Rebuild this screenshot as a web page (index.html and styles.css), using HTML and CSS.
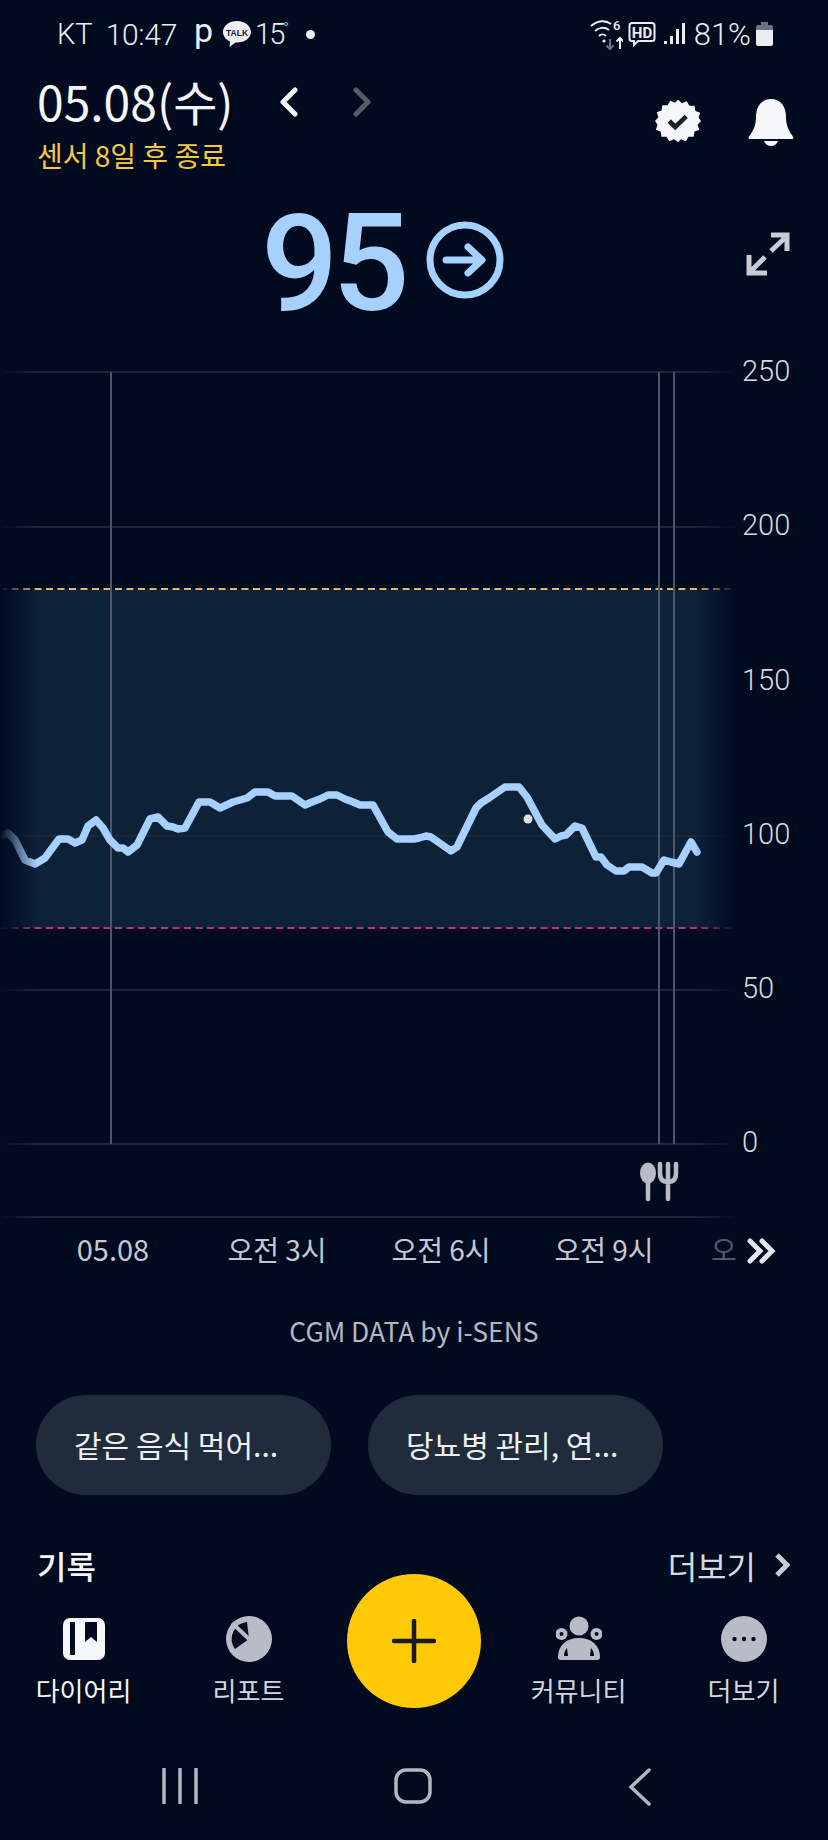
FILE: index.html
```html
<!DOCTYPE html>
<html>
<head>
  <meta charset="utf-8">
  <link rel="stylesheet" href="styles.css">
</head>
<body>

<div class="status">
  <div class="status-left">
    <span>KT</span>
    <span class="status-time">10:47</span>
    <span class="status-p">p</span>
    <svg class="talk" width="30" height="28" viewBox="0 0 30 28">
      <path class="icon-light" d="M15 1C7 1 1 5.800 1 12c0 4.200 2.800 7.600 7 9.400L7.500 27l6-4.600c.5 0 1 .1 1.500.1 8 0 14-4.800 14-10.500S23 1 15 1z"/>
      <text class="talk-text" x="15" y="15.500" text-anchor="middle">TALK</text>
    </svg>
    <span class="status-temp">15<sup>°</sup></span>
    <span class="status-dot"></span>
  </div>
  <div class="status-right">
    <svg width="34" height="34" viewBox="0 0 34 34">
      <g class="wifi">
        <path d="M2 9c7-6 15-6 20 -2"/>
        <path d="M6 14c4-4 10-4 14-1"/>
        <path d="M10 19c2-2 5-2 7 0"/>
      </g>
      <circle class="icon-light" cx="15" cy="24" r="1.600"/>
      <text class="wifi-six" x="24" y="13">6</text>
      <path class="wifi-arrow dim" d="M21 22v10m-3.500-3.500L21 32l3.500-3.500"/>
      <path class="wifi-arrow" d="M31 32V21m-3.500 3.500L31 21l3.500 3.500"/>
    </svg>
    <svg width="28" height="26" viewBox="0 0 28 26">
      <path class="hd-box" d="M4 2h20a2.500 2.500 0 0 1 2.500 2.500v13a2.500 2.500 0 0 1-2.500 2.500H10l-4 4v-4H4a2.500 2.500 0 0 1-2.500-2.500v-13A2.500 2.500 0 0 1 4 2z"/>
      <text class="hd-text" x="14" y="16.500" text-anchor="middle">HD</text>
    </svg>
    <svg class="signal" width="22" height="24" viewBox="0 0 22 24">
      <rect class="icon-light" x="0" y="19" width="3" height="3"/>
      <rect class="icon-light" x="6" y="14" width="3" height="8"/>
      <rect class="icon-light" x="12" y="7" width="3" height="15"/>
      <rect class="icon-light" x="18" y="1" width="3" height="21"/>
    </svg>
    <span class="status-pct">81%</span>
    <svg width="17" height="24" viewBox="0 0 17 24">
      <path class="battery-top" d="M5 0h7v3h3a2 2 0 0 1 2 2v3H0V5a2 2 0 0 1 2-2h3z"/>
      <path class="icon-light" d="M0 8h17v14a2 2 0 0 1-2 2H2a2 2 0 0 1-2-2z"/>
    </svg>
  </div>
</div>

<div class="header">
  <div>
    <div class="date-row">
      <span class="date">05.08(수)</span>
      <svg class="date-prev" width="20" height="30" viewBox="0 0 20 30">
        <path class="chev" d="M16 3L4 15l12 12"/>
      </svg>
      <svg class="date-next" width="20" height="30" viewBox="0 0 20 30">
        <path class="chev chev-off" d="M4 3l12 12L4 27"/>
      </svg>
    </div>
    <div class="sensor">센서 8일 후 종료</div>
  </div>
  <div class="header-icons">
    <svg width="46" height="46" viewBox="-1 -1 50 50">
      <path class="icon-white" d="M24 1l4.300 3.600 5.200-2 2.900 4.800 5.600.1.900 5.500 5.200 2-1.800 5.300L49 24l-3.700 4.200 1.800 5.300-5.200 2-.9 5.500-5.600.1-2.900 4.800-5.200-2L24 47l-4.300-3.100-5.200 2-2.900-4.800-5.600-.1-.9-5.500-5.200-2 1.800-5.300L-1 24l3.700-4.200L.9 14.500l5.200-2 .9-5.500 5.600-.1 2.900-4.800 5.200 2z"/>
      <path class="badge-check" d="M14.500 24l6.500 6.500L33 19"/>
    </svg>
    <svg class="bell" width="48" height="48" viewBox="0 0 48 48">
      <path class="icon-white" d="M24 1C14 1 9 9 9 19c0 9-3 14-7 19.500-.8 1.200-.4 2.500 1 2.500h42c1.400 0 1.800-1.300 1-2.500C42 33 39 28 39 19 39 9 34 1 24 1z"/>
      <path class="icon-white" d="M17 43h14c-1 3-4 5-7 5s-6-2-7-5z"/>
    </svg>
  </div>
</div>

<div class="hero">
  <span class="value">95</span>
  <svg class="trend" width="80" height="80" viewBox="0 0 80 80">
    <circle class="trend-ring" cx="40" cy="40" r="35"/>
    <path class="trend-arrow" d="M21 40h35M43 27l14 13-14 13"/>
  </svg>
  <svg class="expand" width="44" height="44" viewBox="0 0 44 44">
    <path class="expand-line" d="M25 19L41 4M25 3h16v16M19 25L4 40M3 23v18h18"/>
  </svg>
</div>

<svg class="chart" width="828" height="940" viewBox="0 340 828 940">
  <defs>
    <linearGradient id="edgeFade" gradientUnits="userSpaceOnUse" x1="0" y1="0" x2="828" y2="0">
      <stop offset="0" stop-color="#000"/>
      <stop offset="0.045" stop-color="#fff"/>
      <stop offset="0.84" stop-color="#fff"/>
      <stop offset="0.89" stop-color="#000"/>
    </linearGradient>
    <mask id="edgeMask" maskUnits="userSpaceOnUse" x="0" y="340" width="828" height="940">
      <rect x="0" y="340" width="828" height="940" fill="url(#edgeFade)"/>
    </mask>
  </defs>

  <g mask="url(#edgeMask)">
    <rect class="band" x="0" y="589" width="740" height="339"/>
    <line class="grid" x1="0" y1="372" x2="740" y2="372"/>
    <line class="grid" x1="0" y1="527" x2="740" y2="527"/>
    <line class="grid" x1="0" y1="836" x2="740" y2="836"/>
    <line class="grid" x1="0" y1="990" x2="740" y2="990"/>
    <line class="grid" x1="0" y1="1144" x2="740" y2="1144"/>
    <line class="grid" x1="0" y1="1217" x2="740" y2="1217"/>
    <line class="limit-high" x1="0" y1="589" x2="740" y2="589"/>
    <line class="limit-low" x1="0" y1="928" x2="740" y2="928"/>
  </g>

  <line class="marker" x1="111" y1="372" x2="111" y2="1144"/>
  <line class="marker" x1="659" y1="372" x2="659" y2="1144"/>
  <line class="marker" x1="674" y1="372" x2="674" y2="1144"/>

  <g mask="url(#edgeMask)">
    <path class="curve" d="M3 835L8 833 15 840 25 860 35 864 45 858 59 839 68 839 75 843 82 840 88 826 96 820 103 828 110 840 118 848 123 848 128 852 137 845 150 819 158 817 167 826 173 827 178 829 185 828 199 802 210 802 220 808 233 802 240 800 247 798 255 792 268 792 275 796 292 796 305 805 312 802 320 799 328 795 337 795 345 799 353 802 360 805 373 805 388 832 397 839 414 839 419 838 426 836 431 837 451 851 457 847 476 808 481 803 489 798 505 787 519 787 527 797 542 825 555 839 561 836 566 835 575 826 582 828 596 857 601 857 607 865 616 871 624 871 629 867 642 867 652 873 656 873 664 860 671 862 679 864 691 842 697 852"/>
  </g>
  <circle class="point" cx="528" cy="819" r="4.500"/>

  <g class="meal">
    <ellipse cx="648" cy="1173" rx="8" ry="10.500"/>
    <line class="meal-stem" x1="648" y1="1178" x2="648" y2="1199"/>
    <path class="meal-fork" d="M660 1164v9c0 6 3 9 8 9s8-3 8-9v-9M668 1164v35"/>
  </g>

  <g class="y-labels">
    <text x="742" y="381">250</text>
    <text x="742" y="535">200</text>
    <text x="742" y="690">150</text>
    <text x="742" y="844">100</text>
    <text x="742" y="998">50</text>
    <text x="742" y="1152">0</text>
  </g>

  <g class="x-labels">
    <text class="x-label-date" x="113" y="1261">05.08</text>
    <text x="277" y="1261">오전 3시</text>
    <text x="441" y="1261">오전 6시</text>
    <text x="604" y="1261">오전 9시</text>
    <text class="x-label-fade" x="724" y="1261">오</text>
  </g>
  <path class="more-chev" d="M750 1241l10 10-10 10M762 1241l10 10-10 10"/>
</svg>

<div class="source">CGM DATA by i-SENS</div>

<div class="chips">
  <div class="chip">같은 음식 먹어...</div>
  <div class="chip">당뇨병 관리, 연...</div>
</div>

<div class="section">
  <span class="section-title">기록</span>
  <span class="section-more">더보기
    <svg width="16" height="24" viewBox="0 0 16 24">
      <path class="more-arrow" d="M3 2l10 10L3 22"/>
    </svg>
  </span>
</div>

<div class="tabs">
  <div class="tab tab-on">
    <svg width="46" height="46" viewBox="0 0 46 46">
      <rect class="icon-white" x="2" y="2" width="42" height="42" rx="7"/>
      <rect class="icon-cut" x="9" y="6" width="5" height="33"/>
      <path class="icon-cut" d="M24 6h12v20l-6-5-6 5z"/>
    </svg>
    <span>다이어리</span>
  </div>
  <div class="tab">
    <svg width="46" height="46" viewBox="0 0 46 46">
      <circle class="icon-gray" cx="23" cy="23" r="23"/>
      <path class="icon-cut" d="M23 23L21 6A17 17 0 0 0 9 33z"/>
      <line class="pie-split" x1="23" y1="23" x2="6" y2="7"/>
    </svg>
    <span>리포트</span>
  </div>
  <div class="tab tab-add">
    <svg width="44" height="44" viewBox="0 0 44 44">
      <path class="plus" d="M2 22h40M22 2v40"/>
    </svg>
  </div>
  <div class="tab">
    <svg width="46" height="46" viewBox="0 0 46 46">
      <circle class="icon-gray" cx="23" cy="10" r="9.500"/>
      <circle class="icon-gray" cx="5.500" cy="18" r="6"/>
      <circle class="icon-cut" cx="5.500" cy="18" r="2"/>
      <circle class="icon-gray" cx="40.500" cy="18" r="6"/>
      <circle class="icon-cut" cx="40.500" cy="18" r="2"/>
      <path class="icon-gray" d="M2 41c0-12 9-19 21-19s21 7 21 19c0 2-1 3-3 3H5c-2 0-3-1-3-3z"/>
      <path class="icon-cut" d="M8 40c0-3 1-6 3-8l1 8zM38 40c0-3-1-6-3-8l-1 8z"/>
    </svg>
    <span>커뮤니티</span>
  </div>
  <div class="tab">
    <svg width="46" height="46" viewBox="0 0 46 46">
      <circle class="icon-gray" cx="23" cy="23" r="23"/>
      <circle class="icon-cut" cx="13.500" cy="23" r="2.200"/>
      <circle class="icon-cut" cx="23" cy="23" r="2.200"/>
      <circle class="icon-cut" cx="32.500" cy="23" r="2.200"/>
    </svg>
    <span>더보기</span>
  </div>
</div>

<div class="sysnav">
  <svg width="36" height="36" viewBox="0 0 36 36">
    <path class="sys-line" d="M2 1v34M18 1v34M34 1v34"/>
  </svg>
  <svg width="38" height="36" viewBox="0 0 38 36">
    <rect class="sys-line" x="2" y="2" width="34" height="32" rx="10"/>
  </svg>
  <svg width="24" height="38" viewBox="0 0 24 38">
    <path class="sys-line" d="M21 2L3 19l18 17"/>
  </svg>
</div>

</body>
</html>
```

FILE: styles.css
```css
html, body {
  margin: 0;
  padding: 0;
}

body {
  width: 828px;
  height: 1840px;
  overflow: hidden;
  background-color: #020a20;
  color: #f4f5f7;
  font-family: "Noto Sans CJK KR", "Noto Sans", sans-serif;
}

svg {
  display: block;
  flex: none;
}

/* status bar */
.status {
  height: 68px;
  padding: 0 55px 0 57px;
  box-sizing: border-box;
  display: flex;
  align-items: center;
  justify-content: space-between;
  font-family: Roboto, sans-serif;
  font-size: 29px;
  font-weight: 300;
  color: #eceef1;
}

.status-left, .status-right {
  display: flex;
  align-items: center;
}

.status-time {
  margin-left: 13px;
  font-size: 30px;
  letter-spacing: -0.3px;
}

.status-p {
  margin-left: 17px;
  font-weight: 400;
  font-size: 34px;
  line-height: 28px;
  margin-top: -8px;
}

.talk {
  margin-left: 9px;
}

.talk-text {
  font-family: "Liberation Sans", sans-serif;
  font-size: 8.500px;
  font-weight: 700;
  fill: #1a2030;
}

.status-temp {
  margin-left: 3px;
  letter-spacing: -2px;
}

.status-temp sup {
  font-size: 15px;
  line-height: 0;
}

.status-dot {
  width: 9px;
  height: 9px;
  margin-left: 19px;
  border-radius: 50%;
  background-color: #eceef1;
}

.status-right {
  gap: 5px;
}

.wifi path {
  fill: none;
  stroke: #eceef1;
  stroke-width: 2;
}

.wifi-six {
  font-size: 13px;
  font-weight: 500;
  fill: #eceef1;
}

.wifi-arrow {
  fill: none;
  stroke: #eceef1;
  stroke-width: 2;
}

.wifi-arrow.dim {
  stroke: #6c7280;
}

.hd-box {
  fill: none;
  stroke: #eceef1;
  stroke-width: 2;
}

.hd-text {
  font-size: 15px;
  font-weight: 700;
  fill: #eceef1;
}

.signal {
  margin-left: 3px;
}

.status-pct {
  margin-left: 3px;
  font-size: 31px;
}

.icon-light {
  fill: #eceef1;
}

.battery-top {
  fill: #6c7280;
}

/* header */
.header {
  height: 112px;
  padding: 0 33px 0 37px;
  box-sizing: border-box;
  display: flex;
  justify-content: space-between;
}

.date-row {
  display: flex;
  align-items: center;
  height: 68px;
}

.date {
  font-size: 48px;
  font-weight: 400;
  line-height: 68px;
  margin-top: -4px;
  width: 242px;
  white-space: nowrap;
}

.date-next {
  margin-left: 53px;
}

.chev {
  fill: none;
  stroke: #f4f5f7;
  stroke-width: 5;
  stroke-linecap: round;
  stroke-linejoin: round;
}

.chev-off {
  stroke: #555c6a;
}

.sensor {
  font-size: 28px;
  line-height: 38px;
  color: #f5c93f;
}

.header-icons {
  display: flex;
  gap: 46px;
  padding-top: 30px;
}

.icon-white {
  fill: #f6f7f9;
}

.badge-check {
  fill: none;
  stroke: #1a2030;
  stroke-width: 5;
}

/* current value */
.hero {
  height: 160px;
  padding: 0 38px 0 261px;
  display: flex;
  align-items: center;
}

.value {
  font-family: Roboto, sans-serif;
  font-size: 136px;
  font-weight: 500;
  line-height: 160px;
  margin-top: 8px;
  color: #a6d0fd;
  letter-spacing: -6px;
}

.trend {
  margin-left: 21px;
}

.trend-ring {
  fill: none;
  stroke: #a6d0fd;
  stroke-width: 7;
}

.trend-arrow {
  fill: none;
  stroke: #a6d0fd;
  stroke-width: 7;
  stroke-linecap: round;
  stroke-linejoin: round;
}

.expand {
  margin-left: auto;
  margin-top: -12px;
}

.expand-line {
  fill: none;
  stroke: #c9ccd4;
  stroke-width: 5;
}

/* chart */
.band {
  fill: #0d2138;
}

.grid {
  stroke: #1c2739;
  stroke-width: 2;
}

.limit-high {
  stroke: #e9b56a;
  stroke-width: 2;
  stroke-dasharray: 7 4.500;
}

.limit-low {
  stroke: #b8386f;
  stroke-width: 2;
  stroke-dasharray: 7 4.500;
}

.marker {
  stroke: #4b5669;
  stroke-width: 2;
}

.curve {
  fill: none;
  stroke: #a6d0fd;
  stroke-width: 7.500;
  stroke-linejoin: round;
  stroke-linecap: round;
}

.point {
  fill: #dfe2e7;
}

.meal ellipse {
  fill: #b8bcc6;
}

.meal-stem, .meal-fork {
  fill: none;
  stroke: #b8bcc6;
  stroke-width: 4.500;
  stroke-linecap: round;
}

.y-labels text {
  font-family: Roboto, sans-serif;
  font-size: 29px;
  font-weight: 300;
  fill: #d7dade;
}

.x-labels text {
  font-size: 28px;
  font-weight: 400;
  fill: #c4c8d0;
  text-anchor: middle;
}

.x-labels .x-label-date {
  font-size: 29px;
}

.x-labels .x-label-fade {
  opacity: 0.4;
}

.more-chev {
  fill: none;
  stroke: #e4e6ea;
  stroke-width: 5;
  stroke-linecap: round;
}

/* below the chart */
.source {
  height: 92px;
  line-height: 102px;
  font-size: 26.500px;
  font-weight: 400;
  text-align: center;
  color: #b4b8c0;
}

.chips {
  display: flex;
  gap: 37px;
  padding: 23px 36px 0;
}

.chip {
  width: 295px;
  height: 100px;
  box-sizing: border-box;
  padding-left: 38px;
  border-radius: 50px;
  background-color: #202c3c;
  font-size: 30px;
  font-weight: 400;
  line-height: 98px;
  color: #eef0f3;
}

.section {
  height: 60px;
  margin-top: 40px;
  padding: 0 38px 0 37px;
  display: flex;
  align-items: center;
  justify-content: space-between;
}

.section-title {
  font-size: 32px;
  font-weight: 500;
}

.section-more {
  display: flex;
  align-items: center;
  gap: 18px;
  font-size: 32px;
  font-weight: 400;
  color: #d7dade;
}

.more-arrow {
  fill: none;
  stroke: #c9ccd4;
  stroke-width: 5;
}

/* tabs */
.tabs {
  display: grid;
  grid-template-columns: repeat(5, 165px);
  height: 136px;
  margin-top: -21px;
  padding-left: 1px;
}

.tab {
  display: flex;
  flex-direction: column;
  align-items: center;
  padding-top: 42px;
  font-size: 26px;
  font-weight: 400;
  color: #d3d6dc;
  white-space: nowrap;
}

.tab span {
  margin-top: 8px;
  line-height: 40px;
}

.tab-on {
  color: #f6f7f9;
}

.tab-add {
  width: 134px;
  height: 134px;
  justify-self: center;
  box-sizing: border-box;
  padding-top: 0;
  justify-content: center;
  border-radius: 50%;
  background-color: #ffca05;
}

.plus {
  fill: none;
  stroke: #1a1a1a;
  stroke-width: 4.500;
  stroke-linecap: round;
}

.icon-gray {
  fill: #b8bcc6;
}

.icon-cut {
  fill: #020a20;
}

.pie-split {
  stroke: #b8bcc6;
  stroke-width: 4;
}

/* system navigation */
.sysnav {
  height: 100px;
  padding: 58px 176px 0 162px;
  box-sizing: border-box;
  display: flex;
  justify-content: space-between;
}

.sys-line {
  fill: none;
  stroke: #b3b7bf;
  stroke-width: 3.500;
  stroke-linecap: round;
}
```
